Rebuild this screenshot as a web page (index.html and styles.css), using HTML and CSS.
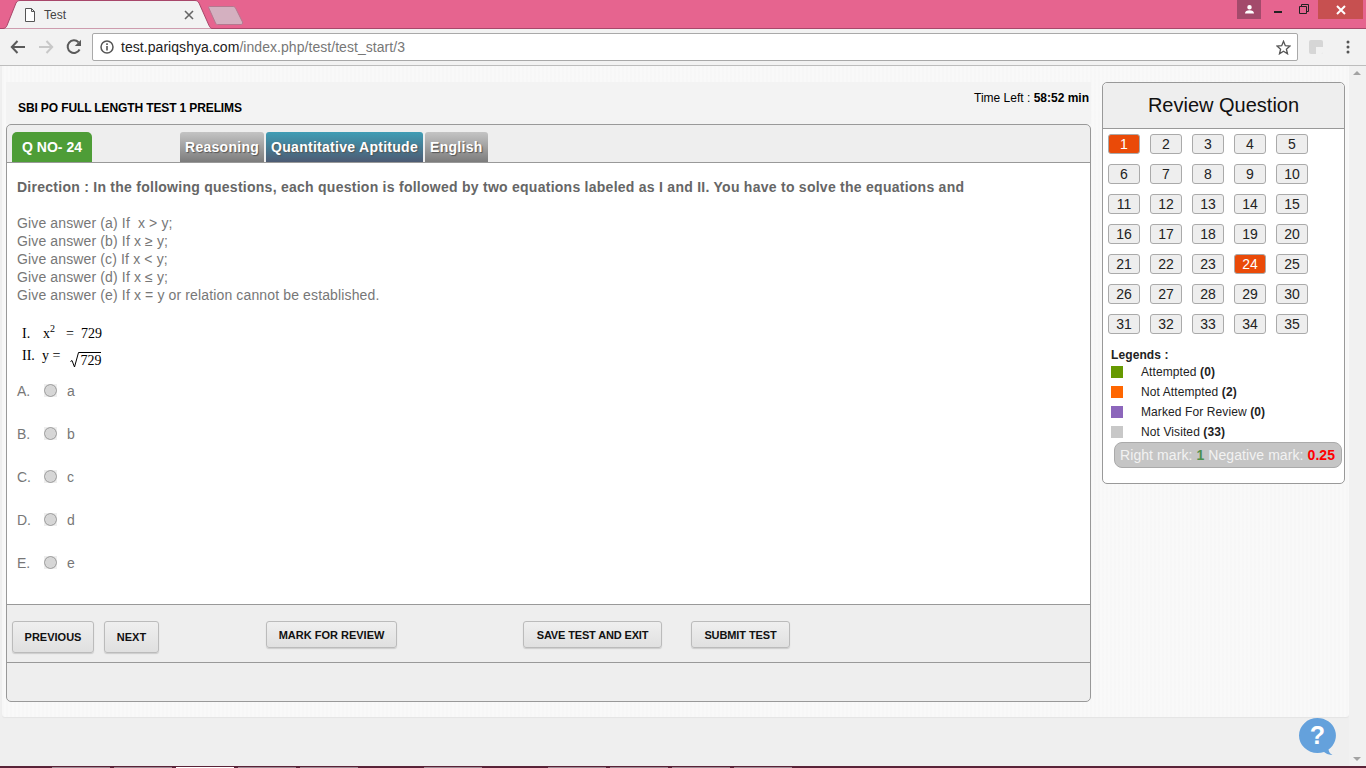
FILE: index.html
```html
<!DOCTYPE html>
<html lang="en">
<head>
    <meta charset="UTF-8">
    <title>Test</title>
    <link rel="stylesheet" href="styles.css">
</head>
<body>
    <div class="tabstrip">
        <svg class="tab-shape" width="212" height="29" viewBox="0 0 212 29">
            <path d="M0 28.500H3C5 28.500 6 27.500 7 25.500L16 3C17 1.500 18 .5 20 .5H195C197 .5 198 1.500 199 3L209 25.500C210 27.500 211 28.500 212 28.500V29H0Z" fill="#f2f2f2" stroke="#a8476a" stroke-width="1"/>
        </svg>
        <svg class="tab-page" width="12" height="14" viewBox="0 0 12 14">
            <path d="M1.500 .5H7.500L10.500 3.500V13.500H1.500ZM7.500 .5V3.500H10.500" fill="#fff" stroke="#555" stroke-width="1"/>
        </svg>
        <span class="tab-title">Test</span>
        <svg class="tab-close" width="10" height="10" viewBox="0 0 10 10">
            <path d="M1 1L9 9M9 1L1 9" stroke="#666" stroke-width="1.600"/>
        </svg>
        <svg class="tab-new" width="36" height="19" viewBox="0 0 36 19">
            <path d="M1.500 .5H25C26 .5 27 1 27.500 2L34.500 16C35 17.500 34 18.500 33 18.500H9.500C8.500 18.500 8 18 7.500 17L.8 2C.4 1 .5 .5 1.500 .5Z" fill="#d4b0c0" stroke="#b4788f"/>
        </svg>
        <div class="win-buttons">
            <div class="win-user">
                <svg width="9" height="9" viewBox="0 0 9 9"><path d="M4.500 0A2.200 2.200 0 0 1 4.500 4.500A2.200 2.200 0 0 1 4.500 0ZM0 8.500C0 6 2 5.300 4.500 5.300S9 6 9 8.500Z" fill="#fff"/></svg>
            </div>
            <div class="win-btn minimize">
                <svg width="8" height="2" viewBox="0 0 8 2"><rect width="8" height="2" fill="#222"/></svg>
            </div>
            <div class="win-btn restore">
                <svg width="10" height="10" viewBox="0 0 10 10"><path d="M.5 2.500H7.500V9.500H.5ZM2.500 2.500V.5H9.500V7.500H7.500" fill="none" stroke="#222"/></svg>
            </div>
            <div class="win-close">
                <svg width="10" height="10" viewBox="0 0 10 10"><path d="M1 1L9 9M9 1L1 9" stroke="#fff" stroke-width="2"/></svg>
            </div>
        </div>
    </div>

    <div class="toolbar">
        <svg class="nav-icon" width="16" height="14" viewBox="0 0 16 14"><path d="M15 7H2M7.500 1L1.800 7L7.500 13" fill="none" stroke="#5a5a5a" stroke-width="2"/></svg>
        <svg class="nav-icon" width="16" height="14" viewBox="0 0 16 14"><path d="M1 7H14M8.500 1L14.200 7L8.500 13" fill="none" stroke="#c8c8c8" stroke-width="2"/></svg>
        <svg class="nav-icon reload" width="16" height="16" viewBox="0 0 16 16"><path d="M13.600 10.500A6.300 6.300 0 1 1 12.500 3.200" fill="none" stroke="#5a5a5a" stroke-width="2"/><path d="M15 0.800V7H8.800Z" fill="#5a5a5a"/></svg>
        <div class="omnibox">
            <svg width="14" height="14" viewBox="0 0 14 14"><circle cx="7" cy="7" r="6" fill="none" stroke="#555" stroke-width="1.500"/><rect x="6.200" y="6" width="1.600" height="4.500" fill="#555"/><rect x="6.200" y="3.300" width="1.600" height="1.700" fill="#555"/></svg>
            <span class="url"><span class="url-host">test.pariqshya.com</span>/index.php/test/test_start/3</span>
            <svg class="star" width="15" height="15" viewBox="0 0 15 15"><path d="M7.500 1.300L9.300 5.700L14 6.100L10.400 9.200L11.500 13.800L7.500 11.300L3.500 13.800L4.600 9.200L1 6.100L5.700 5.700Z" fill="none" stroke="#555" stroke-width="1.300"/></svg>
        </div>
        <svg class="ext-icon" width="14" height="14" viewBox="0 0 14 14"><rect width="14" height="14" rx="2" fill="#d6d6d6"/><path d="M7 14V7H14V12Q14 14 12 14Z" fill="#f2f2f2"/></svg>
        <svg class="menu-icon" width="4" height="14" viewBox="0 0 4 14"><circle cx="2" cy="2" r="1.500" fill="#555"/><circle cx="2" cy="7" r="1.500" fill="#555"/><circle cx="2" cy="12" r="1.500" fill="#555"/></svg>
    </div>

    <div class="viewport">
        <div class="page">
            <div class="sheet">
                <div class="main-col">
                    <div class="test-head">
                        <div class="test-name">SBI PO FULL LENGTH TEST 1 PRELIMS</div>
                        <div class="time-left">Time Left : <b>58:52 min</b></div>
                    </div>
                    <div class="panel">
                        <div class="panel-tabs">
                            <div class="q-no">Q NO- 24</div>
                            <div class="section-tab">Reasoning</div>
                            <div class="section-tab active">Quantitative Aptitude</div>
                            <div class="section-tab">English</div>
                        </div>
                        <div class="question">
                            <p class="direction">Direction : In the following questions, each question is followed by two equations labeled as I and II. You have to solve the equations and</p>
                            <div class="answers">
                                Give answer (a) If &nbsp;x &gt; y;<br>
                                Give answer (b) If x ≥ y;<br>
                                Give answer (c) If x &lt; y;<br>
                                Give answer (d) If x ≤ y;<br>
                                Give answer (e) If x = y or relation cannot be established.
                            </div>
                            <div class="equations">
                                <div class="eq-row"><span class="eq-num">I.</span><span class="eq-x">x<sup>2</sup></span><span>=&nbsp;&nbsp;729</span></div>
                                <div class="eq-row"><span class="eq-num">II.</span><span class="eq-y">y =</span>
                                    <svg class="root" width="10" height="16" viewBox="0 0 10 16"><path d="M.5 9.500L2 8.500L4.500 15L8.500 .5H10" fill="none" stroke="#000" stroke-width="1"/></svg><span class="radicand">729</span>
                                </div>
                            </div>
                            <div class="options">
                                <div class="option"><span class="opt-letter">A.</span><span class="radio"></span><span>a</span></div>
                                <div class="option"><span class="opt-letter">B.</span><span class="radio"></span><span>b</span></div>
                                <div class="option"><span class="opt-letter">C.</span><span class="radio"></span><span>c</span></div>
                                <div class="option"><span class="opt-letter">D.</span><span class="radio"></span><span>d</span></div>
                                <div class="option"><span class="opt-letter">E.</span><span class="radio"></span><span>e</span></div>
                            </div>
                        </div>
                        <div class="actions">
                            <button class="btn tall">PREVIOUS</button>
                            <button class="btn tall next">NEXT</button>
                            <button class="btn mark">MARK FOR REVIEW</button>
                            <button class="btn save">SAVE TEST AND EXIT</button>
                            <button class="btn submit">SUBMIT TEST</button>
                        </div>
                        <div class="panel-foot"></div>
                    </div>
                </div>

                <div class="review">
                    <div class="review-head">Review Question</div>
                    <div class="review-grid" id="grid"></div>
                    <div class="legends">
                        <div class="legend-title">Legends :</div>
                        <div class="legend-row"><span class="swatch green"></span>Attempted&nbsp;<b>(0)</b></div>
                        <div class="legend-row"><span class="swatch orange"></span>Not Attempted&nbsp;<b>(2)</b></div>
                        <div class="legend-row"><span class="swatch purple"></span>Marked For Review&nbsp;<b>(0)</b></div>
                        <div class="legend-row"><span class="swatch grey"></span>Not Visited&nbsp;<b>(33)</b></div>
                    </div>
                    <div class="marks">Right mark: <b class="right">1</b> Negative mark: <b class="negative">0.25</b></div>
                </div>
            </div>
            <svg class="help" width="38" height="38" viewBox="0 0 38 38">
                <path d="M18.500 0A18.500 17.500 0 0 0 18.500 35Q22 35 25 34Q29 37.500 33.500 37Q30 35 29.500 31.500A18.500 17.500 0 0 0 18.500 0Z" fill="#64a1dc"/>
                <text x="18.500" y="26" text-anchor="middle" class="help-mark">?</text>
            </svg>
        </div>
        <div class="scrollbar">
            <span class="arrow-up"></span>
            <span class="arrow-down"></span>
        </div>
    </div>
    <div class="taskbar">
        <span></span><span></span><span class="current"></span><span></span><span></span>
        <span class="off"></span><span></span><span class="off"></span>
        <span></span><span></span><span></span><span></span>
    </div>

    <script>
        // review buttons, 1 and 24 were seen but not answered
        const grid = document.getElementById('grid');
        for (let i = 1; i <= 35; i++) {
            const cell = document.createElement('div');
            cell.className = 'review-cell';
            if (i === 1 || i === 24) {
                cell.classList.add('not-attempted');
            }
            cell.textContent = i;
            grid.appendChild(cell);
        }
    </script>
</body>
</html>
```

FILE: styles.css
```css
* {
    box-sizing: border-box;
}

html, body {
    margin: 0;
    height: 768px;
    overflow: hidden;
}

body {
    font-family: 'Liberation Sans', Arial, sans-serif;
    background: #efefef;
}

/* browser chrome */
.tabstrip {
    position: relative;
    height: 29px;
    background: #e6648f;
    border-bottom: 1px solid #a8476a;
}

.tab-shape {
    position: absolute;
    left: 0;
    top: 0;
}

.tab-page {
    position: absolute;
    left: 24px;
    top: 8px;
}

.tab-title {
    position: absolute;
    left: 44px;
    top: 8px;
    font-size: 12px;
    color: #444;
}

.tab-close {
    position: absolute;
    left: 184px;
    top: 10px;
}

.tab-new {
    position: absolute;
    left: 208px;
    top: 6px;
}

.win-buttons {
    position: absolute;
    right: 3px;
    top: 0;
    display: flex;
    height: 19px;
}

.win-user {
    width: 24px;
    background: #a34a6b;
    margin-right: 4px;
    display: flex;
    align-items: center;
    justify-content: center;
}

.win-btn {
    width: 26px;
    display: flex;
    justify-content: center;
}

.win-btn.minimize {
    padding-top: 11px;
}

.win-btn.restore {
    padding-top: 4px;
    margin-right: 1px;
}

.win-close {
    width: 45px;
    background: #c75050;
    display: flex;
    align-items: center;
    justify-content: center;
}

.toolbar {
    height: 37px;
    background: #f2f2f2;
    border-bottom: 1px solid #bdbdbd;
    display: flex;
    align-items: center;
    padding: 0 0 0 10px;
}

.nav-icon {
    margin-right: 12px;
}

.nav-icon.reload {
    margin-right: 10px;
}

.omnibox {
    width: 1206px;
    height: 28px;
    background: #fff;
    border: 1px solid #a9a9a9;
    border-radius: 2px;
    display: flex;
    align-items: center;
    padding: 0 6px 0 7px;
}

.url {
    flex: 1;
    margin-left: 7px;
    font-size: 14px;
    letter-spacing: .05px;
    color: #777;
}

.url-host {
    color: #222;
}

.ext-icon {
    margin-left: 11px;
}

.menu-icon {
    margin-left: 23px;
}

/* page */
.viewport {
    display: flex;
    height: 700px;
}

.page {
    position: relative;
    width: 1349px;
    background: #efefef;
}

.sheet {
    display: flex;
    height: 651px;
    margin-left: 2px;
    padding-left: 4px;
    background-color: #f9f9f9;
    background-image: repeating-linear-gradient(90deg, rgba(0, 0, 0, .008) 0 2px, transparent 2px 4px);
    border-radius: 0 0 3px 3px;
    box-shadow: 0 1px 1px #e4e4e4;
}

.main-col {
    width: 1085px;
    padding-top: 16px;
}

.test-head {
    height: 42px;
    position: relative;
    background: #f3f3f3;
    color: #000;
}

.test-name {
    position: absolute;
    left: 12px;
    top: 19px;
    font-size: 12px;
    font-weight: bold;
    letter-spacing: -.12px;
}

.time-left {
    position: absolute;
    right: 2px;
    top: 9px;
    font-size: 12px;
}

.panel {
    height: 578px;
    border: 1px solid #999;
    border-radius: 5px;
    background: #eee;
    display: flex;
    flex-direction: column;
}

.panel-tabs {
    height: 38px;
    padding: 7px 0 0 5px;
    display: flex;
    border-bottom: 1px solid #999;
    flex-shrink: 0;
}

.q-no {
    width: 80px;
    background: #4e9d37;
    color: #fff;
    font-size: 14px;
    font-weight: bold;
    text-align: center;
    line-height: 30px;
    border-radius: 5px 5px 0 0;
    margin-right: 88px;
}

.section-tab {
    padding: 0 5px;
    margin-right: 2px;
    font-size: 14px;
    font-weight: bold;
    line-height: 31px;
    height: 30px;
    color: #fff;
    letter-spacing: .28px;
    text-shadow: 1px 1px 1px #555;
    background: linear-gradient(#c4c4c4, #7c7c7c);
    border-radius: 3px 3px 0 0;
}

.section-tab.active {
    background: linear-gradient(#3f9db5, #4d5b73);
}

.question {
    flex: 1;
    background: #fff;
    padding: 17px 10px 0;
    color: #777;
    border-bottom: 1px solid #999;
}

.direction {
    margin: 0;
    font-size: 14px;
    font-weight: bold;
    color: #666;
    letter-spacing: .26px;
    line-height: 15px;
    white-space: nowrap;
}

.answers {
    margin-top: 19px;
    font-size: 14px;
    line-height: 18px;
    letter-spacing: .135px;
}

.equations {
    margin-top: 19px;
    margin-left: 5px;
    font-family: 'Liberation Serif', 'Times New Roman', serif;
    font-size: 14px;
    color: #000;
}

.eq-row {
    display: flex;
    height: 22px;
    align-items: center;
}

.eq-num {
    width: 20px;
}

.eq-x {
    margin-left: 1px;
    margin-right: 11px;
}

.eq-y {
    margin-right: 10px;
}

.equations sup {
    font-size: 10px;
    line-height: 0;
}

.root {
    margin-top: 7px;
}

.radicand {
    border-top: 1px solid #000;
    line-height: 15px;
    margin-top: 7px;
}

.options {
    margin-top: 14px;
}

.option {
    height: 43px;
    display: flex;
    align-items: flex-start;
    font-size: 14px;
    line-height: 20px;
}

.opt-letter {
    width: 27px;
}

.radio {
    width: 13px;
    height: 13px;
    margin-top: 3px;
    margin-right: 10px;
    background: radial-gradient(circle, #d6d6d6 5px, #aaa 5.500px, #aaa 6px, #eee 6.800px);
}

.actions {
    height: 58px;
    padding-top: 16px;
    display: flex;
    align-items: flex-start;
    border-bottom: 1px solid #999;
    padding-left: 5px;
    flex-shrink: 0;
}

.btn {
    height: 27px;
    padding: 0;
    font-family: inherit;
    font-size: 11px;
    font-weight: bold;
    color: #111;
    background: linear-gradient(#efefef, #e0e0e0);
    border: 1px solid #bbb;
    border-radius: 3px;
    box-shadow: 0 1px 1px #ccc;
}

.btn.tall {
    width: 82px;
    height: 32px;
}

.btn.next {
    width: 55px;
    margin-left: 10px;
}

.btn.mark {
    width: 131px;
    margin-left: 107px;
}

.btn.save {
    width: 139px;
    margin-left: 126px;
    letter-spacing: -.15px;
}

.btn.submit {
    width: 99px;
    margin-left: 29px;
    letter-spacing: -.1px;
}

.panel-foot {
    height: 38px;
    flex-shrink: 0;
}

/* review side */
.review {
    width: 243px;
    height: 402px;
    margin: 16px 0 0 11px;
    border: 1px solid #999;
    border-radius: 5px;
    background: #fff;
}

.review-head {
    height: 46px;
    background: #eee;
    border-bottom: 1px solid #999;
    border-radius: 5px 5px 0 0;
    text-align: center;
    font-size: 20px;
    line-height: 45px;
    color: #111;
}

.review-grid {
    display: grid;
    grid-template-columns: repeat(5, 32px);
    grid-auto-rows: 20px;
    column-gap: 10px;
    row-gap: 10px;
    padding: 5px 0 0 5px;
}

.review-cell {
    background: #eee;
    border: 1px solid #aaa;
    border-radius: 3px;
    text-align: center;
    font-size: 14px;
    line-height: 18px;
    color: #222;
}

.review-cell.not-attempted {
    background: #ea4a08;
    color: #fff;
}

.legends {
    margin: 14px 0 0 8px;
    font-size: 12px;
    letter-spacing: .1px;
    color: #222;
}

.legend-title {
    font-weight: bold;
    line-height: 14px;
}

.legend-row {
    display: flex;
    align-items: center;
    height: 20px;
}

.swatch {
    width: 12px;
    height: 12px;
    margin-right: 18px;
}

.swatch.green { background: #669900; }
.swatch.orange { background: #ff6600; }
.swatch.purple { background: #8c66bb; }
.swatch.grey { background: #c8c8c8; }

.marks {
    width: 228px;
    height: 26px;
    margin: 0 0 0 11px;
    background: #c5c5c5;
    border: 1px solid #aaa;
    border-radius: 8px;
    font-size: 14px;
    line-height: 24px;
    letter-spacing: .08px;
    color: #f2f2f2;
    padding-left: 5px;
    white-space: nowrap;
}

.marks .right { color: #4e8f4e; }
.marks .negative { color: #f00; }

.help {
    position: absolute;
    left: 1299px;
    top: 652px;
}

.help-mark {
    font-family: 'Liberation Sans', Arial, sans-serif;
    font-size: 25px;
    font-weight: bold;
    fill: #fff;
}

.scrollbar {
    width: 17px;
    background: #f1f1f1;
    position: relative;
}

.arrow-up,
.arrow-down {
    position: absolute;
    left: 4px;
    border-left: 4px solid transparent;
    border-right: 4px solid transparent;
}

.arrow-up {
    top: 5px;
    border-bottom: 4px solid #a3a3a3;
}

.arrow-down {
    bottom: 5px;
    border-top: 4px solid #a3a3a3;
}

.taskbar {
    height: 2px;
    background: #5a2338;
    padding-left: 52px;
    display: flex;
    align-items: flex-end;
}

.taskbar span {
    width: 58px;
    height: 1px;
    margin-right: 4px;
    background: #a08a94;
}

.taskbar span.current {
    background: #fff;
}

.taskbar span.off {
    background: none;
}
```
